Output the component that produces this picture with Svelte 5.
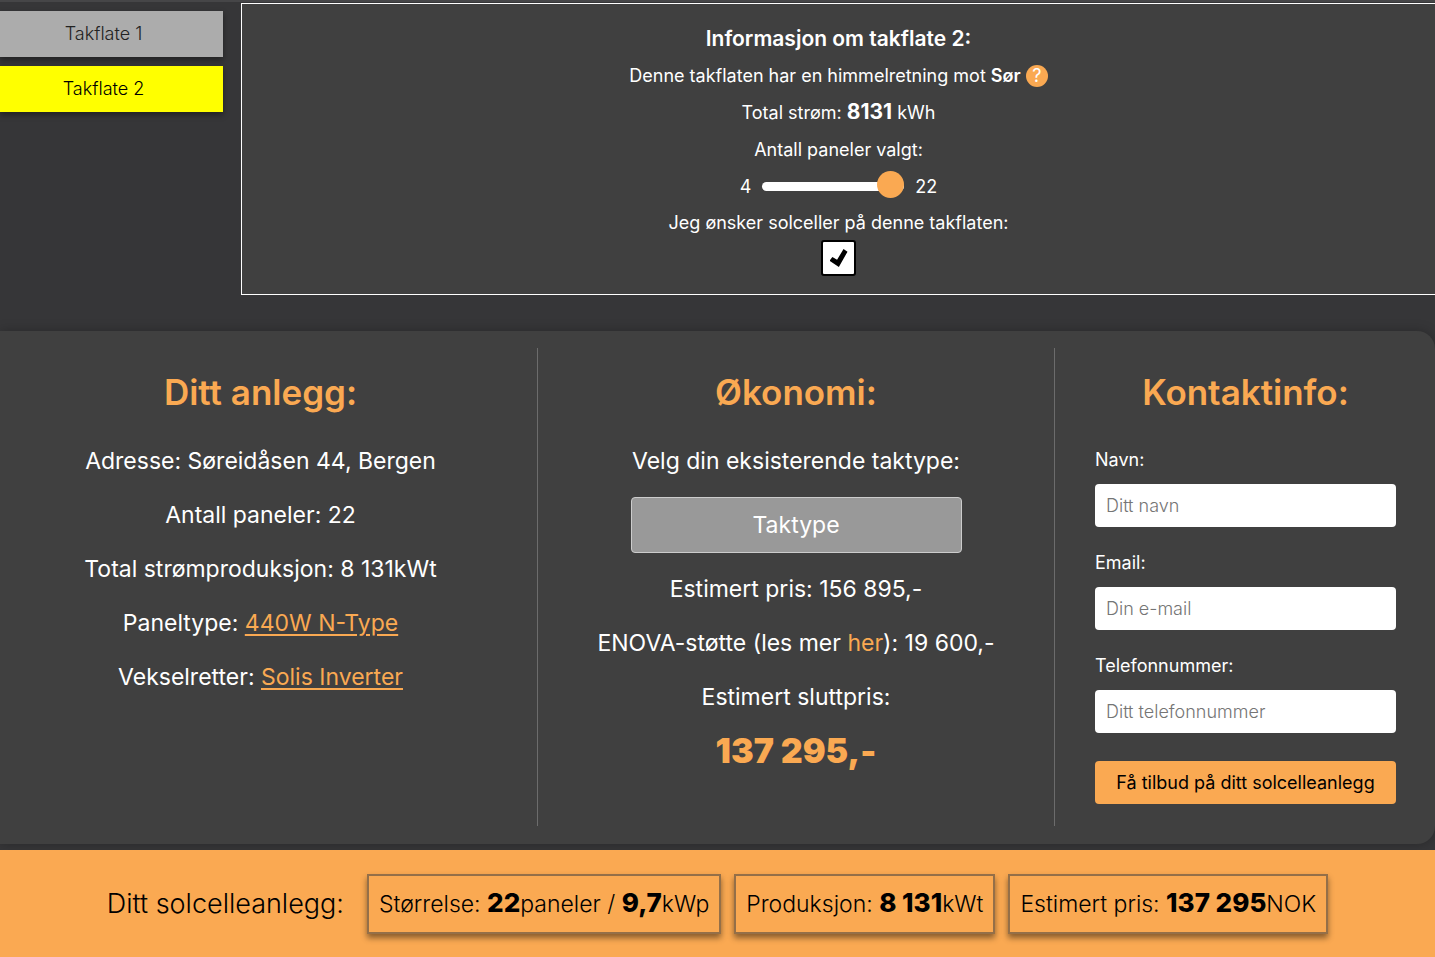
<script lang="ts">
    const roofs = [1, 2];
    const roofTypes = ['Taktype', 'Takstein', 'Takshingel', 'Flatt tak'];

    let selectedRoof = $state(2);
    let panels = $state(22);
    let includeRoof = $state(true);
    let roofType = $state('Taktype');
    let name = $state('');
    let email = $state('');
    let phone = $state('');
</script>

<div class="page">
    <section class="roof">
        <nav class="roof-list">
            {#each roofs as roof}
                <button
                    type="button"
                    class="roof-button"
                    class:selected={selectedRoof === roof}
                    onclick={() => (selectedRoof = roof)}
                >
                    Takflate {roof}
                </button>
            {/each}
        </nav>

        <div class="roof-info">
            <h2>Informasjon om takflate {selectedRoof}:</h2>
            <p>
                Denne takflaten har en himmelretning mot <b>Sør</b>
                <button type="button" class="help">?</button>
            </p>
            <p>Total strøm: <strong class="power">8131</strong> kWh</p>
            <label for="panels">Antall paneler valgt:</label>
            <div class="slider">
                <span>4</span>
                <input id="panels" type="range" min="4" max="22" bind:value={panels} />
                <span>{panels}</span>
            </div>
            <label for="include">Jeg ønsker solceller på denne takflaten:</label>
            <input id="include" type="checkbox" bind:checked={includeRoof} />
        </div>
    </section>

    <main class="summary">
        <section class="column plant">
            <h1>Ditt anlegg:</h1>
            <p>Adresse: Søreidåsen 44, Bergen</p>
            <p>Antall paneler: {panels}</p>
            <p>Total strømproduksjon: 8 131kWt</p>
            <p>Paneltype: <a href="#panel">440W N-Type</a></p>
            <p>Vekselretter: <a href="#inverter">Solis Inverter</a></p>
        </section>

        <section class="column economy">
            <h1>Økonomi:</h1>
            <label for="roof-type">Velg din eksisterende taktype:</label>
            <select id="roof-type" bind:value={roofType}>
                {#each roofTypes as type}
                    <option>{type}</option>
                {/each}
            </select>
            <p>Estimert pris: 156 895,-</p>
            <p>ENOVA-støtte (les mer <a class="plain" href="#enova">her</a>): 19 600,-</p>
            <p>Estimert sluttpris:</p>
            <strong class="total">137 295,-</strong>
        </section>

        <section class="column contact">
            <h1>Kontaktinfo:</h1>
            <form onsubmit={(e) => e.preventDefault()}>
                <label for="name">Navn:</label>
                <input id="name" type="text" placeholder="Ditt navn" bind:value={name} />
                <label for="email">Email:</label>
                <input id="email" type="email" placeholder="Din e-mail" bind:value={email} />
                <label for="phone">Telefonnummer:</label>
                <input id="phone" type="tel" placeholder="Ditt telefonnummer" bind:value={phone} />
                <button type="submit">Få tilbud på ditt solcelleanlegg</button>
            </form>
        </section>
    </main>

    <footer>
        <span class="footer-title">Ditt solcelleanlegg:</span>
        <div class="stat">Størrelse: <b>{panels}</b>paneler / <b>9,7</b>kWp</div>
        <div class="stat">Produksjon: <b>8 131</b>kWt</div>
        <div class="stat">Estimert pris: <b>137 295</b>NOK</div>
    </footer>
</div>

<style>
    :global(body) {
        margin: 0;
        background: #363638;
    }

    .page {
        min-height: 100vh;
        display: flex;
        flex-direction: column;
        box-sizing: border-box;
        border-top: 2px solid #464648;
        color: white;
        font-family: Inter, 'Liberation Sans', sans-serif;
        font-size: 18px;
        line-height: 24px;
        overflow-x: hidden;
    }

    .page * {
        box-sizing: border-box;
    }

    h1,
    h2,
    p {
        margin: 0;
    }

    button,
    input,
    select {
        font: inherit;
    }

    a {
        color: #faa952;
        text-underline-offset: 3px;
    }

    .roof {
        display: flex;
        gap: 18px;
        padding-top: 1px;
    }

    .roof-list {
        width: 223px;
        flex-shrink: 0;
        display: flex;
        flex-direction: column;
        gap: 9px;
        padding-top: 8px;
    }

    .roof-button {
        height: 46px;
        padding: 0 16px 0 0;
        border: none;
        background: #acacac;
        color: #222;
        font-weight: 300;
        box-shadow: 0 3px 6px rgba(0, 0, 0, 0.4);
        cursor: pointer;
    }

    .roof-button.selected {
        background: yellow;
        color: black;
    }

    .roof-info {
        flex: 1;
        display: flex;
        flex-direction: column;
        align-items: center;
        gap: 13px;
        padding: 23px 0 18px;
        border: 1px solid white;
        border-right: none;
        background: #404040;
    }

    h2 {
        font-size: 21px;
        line-height: 24px;
        font-weight: 600;
    }

    .roof-info b {
        font-weight: 600;
    }

    .help {
        width: 22px;
        height: 22px;
        padding: 0;
        border: none;
        border-radius: 50%;
        background: #faa952;
        color: white;
        line-height: 22px;
    }

    .power {
        font-size: 21px;
        line-height: 20px;
        font-weight: 700;
    }

    .slider {
        display: flex;
        align-items: center;
        gap: 11px;
        height: 23px;
    }

    .slider input {
        width: 142px;
        height: 27px;
        margin: 0;
        appearance: none;
        background: transparent;
    }

    .slider input::-webkit-slider-runnable-track {
        height: 9px;
        border-radius: 5px;
        background: white;
    }

    .slider input::-webkit-slider-thumb {
        appearance: none;
        width: 27px;
        height: 27px;
        margin-top: -11px;
        border: none;
        border-radius: 50%;
        background: #faa952;
    }

    input[type='checkbox'] {
        appearance: none;
        display: grid;
        place-items: center;
        width: 35px;
        height: 36px;
        margin: -8px 0 0;
        border: 2px solid black;
        border-radius: 3px;
        background: white;
    }

    input[type='checkbox']:checked::before {
        content: '';
        width: 18px;
        height: 18px;
        background: black;
        clip-path: polygon(0 65%, 16% 44%, 42% 60%, 78% 0, 100% 15%, 52% 100%);
    }

    .summary {
        flex: 1;
        display: grid;
        grid-template-columns: 538fr 517fr 380fr;
        margin: 36px 0 6px;
        padding: 17px 0 18px;
        border-radius: 0 18px 18px 0;
        background: #404040;
        box-shadow: 0 0 12px rgba(0, 0, 0, 0.25);
    }

    .column {
        display: flex;
        flex-direction: column;
        align-items: center;
        gap: 24px;
        padding-top: 22px;
        border-right: 1px solid #6c6c6c;
        font-size: 23px;
        line-height: 30px;
    }

    .plant {
        padding-right: 16px;
    }

    h1 {
        margin-bottom: 7px;
        color: #faa952;
        font-size: 35px;
        line-height: 45px;
        font-weight: 600;
    }

    select {
        width: 331px;
        height: 56px;
        margin: -3px 0;
        appearance: none;
        border: 1px solid #ccc;
        border-radius: 4px;
        background: #999;
        color: white;
        text-align: center;
    }

    .plain {
        text-decoration: none;
    }

    .total {
        color: #faa952;
        font-size: 34px;
        font-weight: 900;
    }

    .contact {
        border-right: none;
        padding-right: 39px;
        padding-left: 40px;
    }

    form {
        display: flex;
        flex-direction: column;
        width: 100%;
        padding-top: 2px;
        font-size: 18px;
        line-height: 24px;
    }

    form input,
    form button {
        width: 100%;
        height: 43px;
        border: none;
        border-radius: 4px;
    }

    form input {
        margin: 12px 0 24px;
        padding: 0 11px;
        background: white;
        color: #222;
        font-weight: 300;
    }

    form input::placeholder {
        color: #757575;
    }

    form button {
        margin-top: 4px;
        padding: 0;
        background: #faa952;
        color: black;
        cursor: pointer;
    }

    footer {
        display: flex;
        align-items: center;
        justify-content: center;
        gap: 13px;
        min-height: 107px;
        background: #faa952;
        color: black;
        font-size: 23px;
        line-height: 30px;
        font-weight: 300;
    }

    .footer-title {
        margin-right: 10px;
        font-size: 27px;
    }

    .stat {
        padding: 13px 10px;
        border: 2px solid rgba(64, 64, 64, 0.55);
        box-shadow: 0 4px 6px rgba(0, 0, 0, 0.45);
        white-space: nowrap;
    }

    .stat b {
        font-size: 26px;
        line-height: 26px;
        font-weight: 800;
    }
</style>
